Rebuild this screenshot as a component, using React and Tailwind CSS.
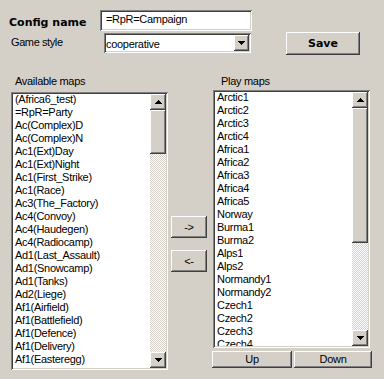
import React from "react";

const leftMaps = [
  "(Africa6_test)",
  "=RpR=Party",
  "Ac(Complex)D",
  "Ac(Complex)N",
  "Ac1(Ext)Day",
  "Ac1(Ext)Night",
  "Ac1(First_Strike)",
  "Ac1(Race)",
  "Ac3(The_Factory)",
  "Ac4(Convoy)",
  "Ac4(Haudegen)",
  "Ac4(Radiocamp)",
  "Ad1(Last_Assault)",
  "Ad1(Snowcamp)",
  "Ad1(Tanks)",
  "Ad2(Liege)",
  "Af1(Airfield)",
  "Af1(Battlefield)",
  "Af1(Defence)",
  "Af1(Delivery)",
  "Af1(Easteregg)",
  "Af1(Escort)",
];

const playMaps = [
  "Arctic1",
  "Arctic2",
  "Arctic3",
  "Arctic4",
  "Africa1",
  "Africa2",
  "Africa3",
  "Africa4",
  "Africa5",
  "Norway",
  "Burma1",
  "Burma2",
  "Alps1",
  "Alps2",
  "Normandy1",
  "Normandy2",
  "Czech1",
  "Czech2",
  "Czech3",
  "Czech4",
];

const sunken =
  "shadow-[inset_1px_1px_0_#808080,inset_-1px_-1px_0_#ffffff,inset_2px_2px_0_#404040,inset_-2px_-2px_0_#d4d0c8]";
const raised =
  "shadow-[inset_-1px_-1px_0_#404040,inset_1px_1px_0_#ffffff,inset_-2px_-2px_0_#808080,inset_2px_2px_0_#d4d0c8]";

const Arrow = ({ down }) => (
  <svg width="7" height="4" shapeRendering="crispEdges" className={down ? "rotate-180" : ""}>
    <rect x="3" y="0" width="1" height="1" fill="#000" />
    <rect x="2" y="1" width="3" height="1" fill="#000" />
    <rect x="1" y="2" width="5" height="1" fill="#000" />
    <rect x="0" y="3" width="7" height="1" fill="#000" />
  </svg>
);

const ArrowButton = ({ down, className = "" }) => (
  <div className={`bg-[#d4d0c8] ${raised} flex items-center justify-center ${className}`}>
    <Arrow down={down} />
  </div>
);

const ListBox = ({ items, height, thumb }) => (
  <div className={`bg-white ${sunken} p-[2px] flex w-[157px] ${height}`}>
    <div className="flex-1 overflow-hidden pl-[2px]">
      <div className="-mt-[1px]">
        {items.map((m) => (
          <div key={m} className="h-[13px] whitespace-nowrap">
            {m}
          </div>
        ))}
      </div>
    </div>
    <div className="w-[16px] flex flex-col">
      <ArrowButton className="h-[16px]" />
      <div className={`bg-[#d4d0c8] ${raised} ${thumb}`}></div>
      <div className="flex-1 bg-[image:repeating-conic-gradient(#ffffff_0%_25%,#d4d0c8_0%_50%)] bg-[length:2px_2px]"></div>
      <ArrowButton down className="h-[16px]" />
    </div>
  </div>
);

const Button = ({ children, className = "" }) => (
  <div className={`bg-[#d4d0c8] ${raised} flex items-center justify-center ${className}`}>
    {children}
  </div>
);

export default function App() {
  return (
    <div className="w-[384px] h-[379px] bg-[#d4d0c8] overflow-hidden text-black text-[11px] leading-[13px] tracking-[-0.3px] font-['Liberation_Sans',Arial,sans-serif]">
      {/* config name */}
      <div className="flex pt-[10px]">
        <div className="w-[100px] pl-[9px] pt-[6px] font-bold tracking-normal font-['DejaVu_Sans',sans-serif]">
          Config name
        </div>
        <div className={`w-[152px] h-[21px] bg-white ${sunken} pl-[6px] pt-[3px]`}>=RpR=Campaign</div>
      </div>

      {/* game style */}
      <div className="flex items-start mt-[1px]">
        <div className="w-[104px] pl-[11px] pt-[4px] tracking-[-0.4px]">Game style</div>
        <div className={`mt-[1px] w-[147px] h-[20px] bg-white ${sunken} flex p-[2px]`}>
          <div className="flex-1 pt-[3px]">cooperative</div>
          <ArrowButton down className="w-[15px] h-[16px]" />
        </div>
        <Button className="ml-[35px] w-[74px] h-[23px] font-bold tracking-normal font-['DejaVu_Sans',sans-serif]">
          Save
        </Button>
      </div>

      {/* map lists */}
      <div className="flex items-start mt-[20px]">
        <div className="ml-[11px] w-[157px]">
          <div className="pl-[4px] h-[13px]">Available maps</div>
          <div className="mt-[4px]">
            <ListBox items={leftMaps} height="h-[278px]" thumb="h-[44px]" />
          </div>
        </div>

        <div className="ml-[3px] w-[36px] mt-[141px] flex flex-col gap-[12px]">
          <Button className="h-[22px]">-&gt;</Button>
          <Button className="h-[22px]">&lt;-</Button>
        </div>

        <div className="ml-[6px]">
          <div className="pl-[8px] h-[13px]">Play maps</div>
          <div className="mt-[2px]">
            <ListBox items={playMaps} height="h-[258px]" thumb="h-[135px]" />
          </div>
          <div className="flex gap-[2px] mt-[3px] -ml-[1px]">
            <Button className="w-[80px] h-[17px]">Up</Button>
            <Button className="w-[78px] h-[17px]">Down</Button>
          </div>
        </div>
      </div>
    </div>
  );
}
